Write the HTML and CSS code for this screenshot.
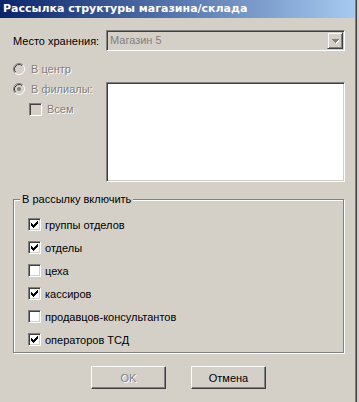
FILE: index.html
```html
<!DOCTYPE html>
<html lang="ru">
<head>
<meta charset="utf-8">
<title>Рассылка структуры магазина/склада</title>
<link rel="stylesheet" href="styles.css">
</head>
<body>
<div class="frame">
  <div class="window">
    <div class="titlebar">Рассылка структуры магазина/склада</div>
    <div class="content">
      <div class="row-store">
        <span class="label">Место хранения:</span>
        <div class="combo">
          <span class="combo-text">Магазин 5</span>
          <span class="combo-btn">
            <svg width="7" height="5" viewBox="0 0 7 5" shape-rendering="crispEdges">
              <path d="M1 1h7v1h-7zM2 2h5v1h-5zM3 3h3v1h-3zM4 4h1v1h-1z" fill="#fff"/>
              <path d="M0 0h7v1h-7zM1 1h5v1h-5zM2 2h3v1h-3zM3 3h1v1h-1z" fill="#808080"/>
            </svg>
          </span>
        </div>
      </div>
      <div class="row-target">
        <div class="targets">
          <div class="opt">
            <svg class="radio" width="12" height="12" viewBox="0 0 12 12">
              <circle cx="6" cy="6" r="5" fill="#d4d0c8"/>
              <path d="M2.11 9.89A5.5 5.5 0 0 1 9.89 2.11" fill="none" stroke="#808080"/>
              <path d="M2.82 9.18A4.5 4.5 0 0 1 9.18 2.82" fill="none" stroke="#404040"/>
              <path d="M9.89 2.11A5.5 5.5 0 0 1 2.11 9.89" fill="none" stroke="#fff"/>
              <path d="M9.18 2.82A4.5 4.5 0 0 1 2.82 9.18" fill="none" stroke="#d4d0c8"/>
            </svg>
            <span class="dis">В центр</span>
          </div>
          <div class="opt">
            <svg class="radio" width="12" height="12" viewBox="0 0 12 12">
              <circle cx="6" cy="6" r="5" fill="#d4d0c8"/>
              <path d="M2.11 9.89A5.5 5.5 0 0 1 9.89 2.11" fill="none" stroke="#808080"/>
              <path d="M2.82 9.18A4.5 4.5 0 0 1 9.18 2.82" fill="none" stroke="#404040"/>
              <path d="M9.89 2.11A5.5 5.5 0 0 1 2.11 9.89" fill="none" stroke="#fff"/>
              <path d="M9.18 2.82A4.5 4.5 0 0 1 2.82 9.18" fill="none" stroke="#d4d0c8"/>
              <circle cx="6" cy="6" r="2" fill="#808080"/>
            </svg>
            <span class="dis">В филиалы:</span>
          </div>
          <div class="opt opt-all">
            <span class="cb cb-dis"></span>
            <span class="dis">Всем</span>
          </div>
        </div>
        <div class="listbox"></div>
      </div>
      <div class="group">
        <span class="legend">В рассылку включить</span>
        <div class="item"><span class="cb"><svg class="check" width="7" height="7" viewBox="0 0 7 7" shape-rendering="crispEdges"><path d="M6 0h1v1h-1zM5 1h2v1h-2zM0 2h1v1h-1zM4 2h3v1h-3zM0 3h2v1h-2zM3 3h3v1h-3zM0 4h5v1h-5zM1 5h3v1h-3zM2 6h1v1h-1z" fill="#000"/></svg></span><span>группы отделов</span></div>
        <div class="item"><span class="cb"><svg class="check" width="7" height="7" viewBox="0 0 7 7" shape-rendering="crispEdges"><path d="M6 0h1v1h-1zM5 1h2v1h-2zM0 2h1v1h-1zM4 2h3v1h-3zM0 3h2v1h-2zM3 3h3v1h-3zM0 4h5v1h-5zM1 5h3v1h-3zM2 6h1v1h-1z" fill="#000"/></svg></span><span>отделы</span></div>
        <div class="item"><span class="cb"></span><span>цеха</span></div>
        <div class="item"><span class="cb"><svg class="check" width="7" height="7" viewBox="0 0 7 7" shape-rendering="crispEdges"><path d="M6 0h1v1h-1zM5 1h2v1h-2zM0 2h1v1h-1zM4 2h3v1h-3zM0 3h2v1h-2zM3 3h3v1h-3zM0 4h5v1h-5zM1 5h3v1h-3zM2 6h1v1h-1z" fill="#000"/></svg></span><span>кассиров</span></div>
        <div class="item"><span class="cb"></span><span>продавцов-консультантов</span></div>
        <div class="item"><span class="cb"><svg class="check" width="7" height="7" viewBox="0 0 7 7" shape-rendering="crispEdges"><path d="M6 0h1v1h-1zM5 1h2v1h-2zM0 2h1v1h-1zM4 2h3v1h-3zM0 3h2v1h-2zM3 3h3v1h-3zM0 4h5v1h-5zM1 5h3v1h-3zM2 6h1v1h-1z" fill="#000"/></svg></span><span>операторов ТСД</span></div>
      </div>
      <div class="buttons">
        <div class="btn"><span class="dis">OK</span></div>
        <div class="btn">Отмена</div>
      </div>
    </div>
  </div>
</div>
</body>
</html>
```
FILE: styles.css
```css
html, body {
  margin: 0;
  padding: 0;
  background: #d4d0c8;
}
body {
  width: 359px;
  height: 402px;
  overflow: hidden;
  font-family: "Liberation Sans", Arial, sans-serif;
  font-size: 11px;
  color: #000;
}
.frame {
  width: 356px;
  height: 402px;
  border-right: 1px solid #404040;
}
.window {
  width: 355px;
  height: 402px;
  border-right: 1px solid #808080;
  background: #d4d0c8;
}
.titlebar {
  height: 18px;
  line-height: 18px;
  padding-left: 3px;
  background: linear-gradient(to right, #0a246a, #a6caf0);
  color: #fff;
  font-family: "DejaVu Sans", sans-serif;
  font-weight: bold;
  font-size: 11px;
  white-space: nowrap;
}
.content {
  padding: 0 10px 0 13px;
}
.row-store {
  display: flex;
  align-items: center;
  margin-top: 12px;
  height: 21px;
}
.label {
  width: 93px;
  flex: none;
}
.combo {
  flex: 1;
  height: 21px;
  box-sizing: border-box;
  border: 1px solid;
  border-color: #808080 #fff #fff #808080;
  box-shadow: inset 1px 1px 0 #404040, inset -1px -1px 0 #d4d0c8;
  background: #d4d0c8;
  padding: 1px;
  display: flex;
}
.combo-text {
  flex: 1;
  padding-left: 2px;
  line-height: 17px;
  color: #808080;
}
.combo-btn {
  width: 16px;
  height: 17px;
  box-sizing: border-box;
  border: 1px solid;
  border-color: #d4d0c8 #404040 #404040 #d4d0c8;
  box-shadow: inset 1px 1px 0 #fff, inset -1px -1px 0 #808080;
  display: flex;
  align-items: center;
  justify-content: center;
  padding-top: 1px;
}
.row-target {
  display: flex;
}
.targets {
  width: 93px;
  flex: none;
  padding-top: 8px;
}
.opt {
  display: flex;
  align-items: center;
  height: 20px;
  gap: 6px;
}
.opt-all {
  margin-left: 16px;
  gap: 5px;
}
.radio {
  flex: none;
  display: block;
}
.dis {
  color: #808080;
  text-shadow: 1px 1px 0 #fff;
}
.listbox {
  flex: 1;
  margin-top: 31px;
  height: 100px;
  box-sizing: border-box;
  border: 1px solid;
  border-color: #808080 #fff #fff #808080;
  box-shadow: inset 1px 1px 0 #404040, inset -1px -1px 0 #d4d0c8;
  background: #fff;
}
.cb {
  flex: none;
  width: 13px;
  height: 13px;
  box-sizing: border-box;
  border: 1px solid;
  border-color: #808080 #fff #fff #808080;
  box-shadow: inset 1px 1px 0 #404040, inset -1px -1px 0 #d4d0c8;
  background: #fff;
  padding: 2px 0 0 2px;
  display: block;
}
.cb-dis {
  background: #d4d0c8;
}
.check {
  display: block;
}
.group {
  position: relative;
  margin-top: 17px;
  margin-right: 1px;
  border: 1px solid #808080;
  box-shadow: inset 1px 1px 0 #fff, 1px 1px 0 #fff;
  padding: 13px 0 1px 14px;
}
.legend {
  position: absolute;
  top: -7px;
  left: 6px;
  padding: 0 2px 0 2px;
  background: #d4d0c8;
  line-height: 13px;
}
.item {
  display: flex;
  align-items: center;
  height: 23px;
  gap: 4px;
}
.buttons {
  display: flex;
  gap: 25px;
  margin-top: 13px;
  margin-left: 78px;
}
.btn {
  width: 75px;
  height: 23px;
  box-sizing: border-box;
  border: 1px solid;
  border-color: #fff #404040 #404040 #fff;
  box-shadow: inset -1px -1px 0 #808080, inset 1px 1px 0 #d4d0c8;
  background: #d4d0c8;
  display: flex;
  align-items: center;
  justify-content: center;
}
```
